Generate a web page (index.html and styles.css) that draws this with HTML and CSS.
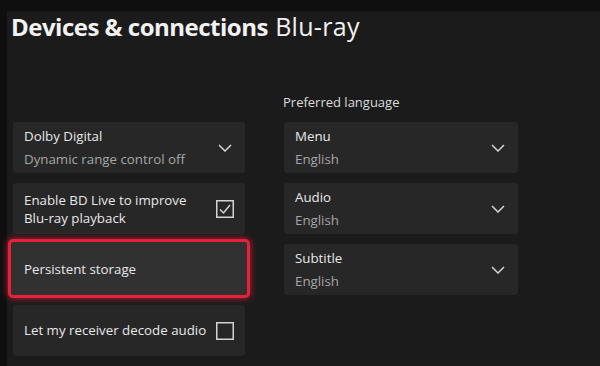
FILE: index.html
```html
<!DOCTYPE html>
<html>
<head>
<meta charset="utf-8">
<link rel="stylesheet" href="styles.css">
</head>
<body>
<div class="screen">
  <h1 class="title"><span class="title-main">Devices &amp; connections</span> <span class="title-sub">Blu-ray</span></h1>
  <div class="columns">
    <div class="col col-left">
      <div class="card">
        <div class="card-text">
          <div class="primary">Dolby Digital</div>
          <div class="secondary">Dynamic range control off</div>
        </div>
        <svg class="chev" viewBox="0 0 14 8"><path d="M1 1 L7 7 L13 1" fill="none" stroke="currentColor" stroke-width="1.5"/></svg>
      </div>
      <div class="card">
        <div class="card-text">
          <div class="primary multi">Enable BD Live to improve<br>Blu-ray playback</div>
        </div>
        <svg class="box" viewBox="0 0 18 18"><rect x="0.75" y="0.75" width="16.5" height="16.5" fill="none" stroke="currentColor" stroke-width="1.5"/><path d="M4 9.5 L7.5 13 L14 5" fill="none" stroke="currentColor" stroke-width="1.5"/></svg>
      </div>
      <div class="card focused">
        <div class="card-text">
          <div class="primary">Persistent storage</div>
        </div>
      </div>
      <div class="card">
        <div class="card-text">
          <div class="primary">Let my receiver decode audio</div>
        </div>
        <svg class="box" viewBox="0 0 18 18"><rect x="0.75" y="0.75" width="16.5" height="16.5" fill="none" stroke="currentColor" stroke-width="1.5"/></svg>
      </div>
    </div>
    <div class="col col-right">
      <div class="label">Preferred language</div>
      <div class="card">
        <div class="card-text">
          <div class="primary">Menu</div>
          <div class="secondary">English</div>
        </div>
        <svg class="chev" viewBox="0 0 14 8"><path d="M1 1 L7 7 L13 1" fill="none" stroke="currentColor" stroke-width="1.5"/></svg>
      </div>
      <div class="card">
        <div class="card-text">
          <div class="primary">Audio</div>
          <div class="secondary">English</div>
        </div>
        <svg class="chev" viewBox="0 0 14 8"><path d="M1 1 L7 7 L13 1" fill="none" stroke="currentColor" stroke-width="1.5"/></svg>
      </div>
      <div class="card">
        <div class="card-text">
          <div class="primary">Subtitle</div>
          <div class="secondary">English</div>
        </div>
        <svg class="chev" viewBox="0 0 14 8"><path d="M1 1 L7 7 L13 1" fill="none" stroke="currentColor" stroke-width="1.5"/></svg>
      </div>
    </div>
  </div>
</div>
</body>
</html>
```
FILE: styles.css
```css
html, body {
  margin: 0;
  padding: 0;
  background: #0f0f0f;
  width: 600px;
  height: 366px;
  overflow: hidden;
  font-family: "Open Sans", "Noto Sans", sans-serif;
}
.screen {
  margin: 11px 0 0 7px;
  height: 355px;
  background: #1b1b1b;
  padding: 0 0 0 4px;
  box-sizing: border-box;
}
.title {
  margin: 0;
  height: 34px;
  line-height: 30px;
  font-size: 24px;
  color: #f2f2f2;
  white-space: nowrap;
}
.title-main {
  font-weight: 700;
  letter-spacing: -0.5px;
}
.title-sub {
  font-weight: 400;
  font-size: 25px;
  margin-left: 1px;
  letter-spacing: 0.3px;
}
.columns {
  display: flex;
  gap: 39px;
  padding-left: 2px;
  margin-top: 77px;
}
.col {
  display: flex;
  flex-direction: column;
  gap: 10px;
}
.col-left {
  width: 232px;
}
.col-right {
  width: 234px;
  margin-top: -29px;
}
.label {
  height: 19px;
  font-size: 13px;
  color: #dcdcdc;
  line-height: 19px;
  margin-left: -1px;
}
.card {
  height: 51px;
  background: #272727;
  border-radius: 3px;
  display: flex;
  align-items: center;
  justify-content: space-between;
  padding: 0 11px;
  box-sizing: border-box;
  color: #e6e6e6;
}
.card-text {
  font-size: 13.3px;
}
.primary {
  line-height: 23px;
  color: #e8e8e8;
}
.primary.multi {
  line-height: 18px;
}
.secondary {
  line-height: 23px;
  color: #a6a6a6;
}
.chev {
  width: 14px;
  height: 8px;
  color: #d4d4d4;
  margin-right: 2px;
}
.box {
  width: 18px;
  height: 18px;
  color: #d4d4d4;
}
.focused {
  height: 59px;
  margin: -5px -5px -3px -5px;
  background: #313131;
  border: 3px solid #e8203a;
  border-radius: 5px;
  box-shadow: 0 0 7px rgba(240, 30, 60, 0.8);
  padding: 2px 16px 0 13px;
}
```
